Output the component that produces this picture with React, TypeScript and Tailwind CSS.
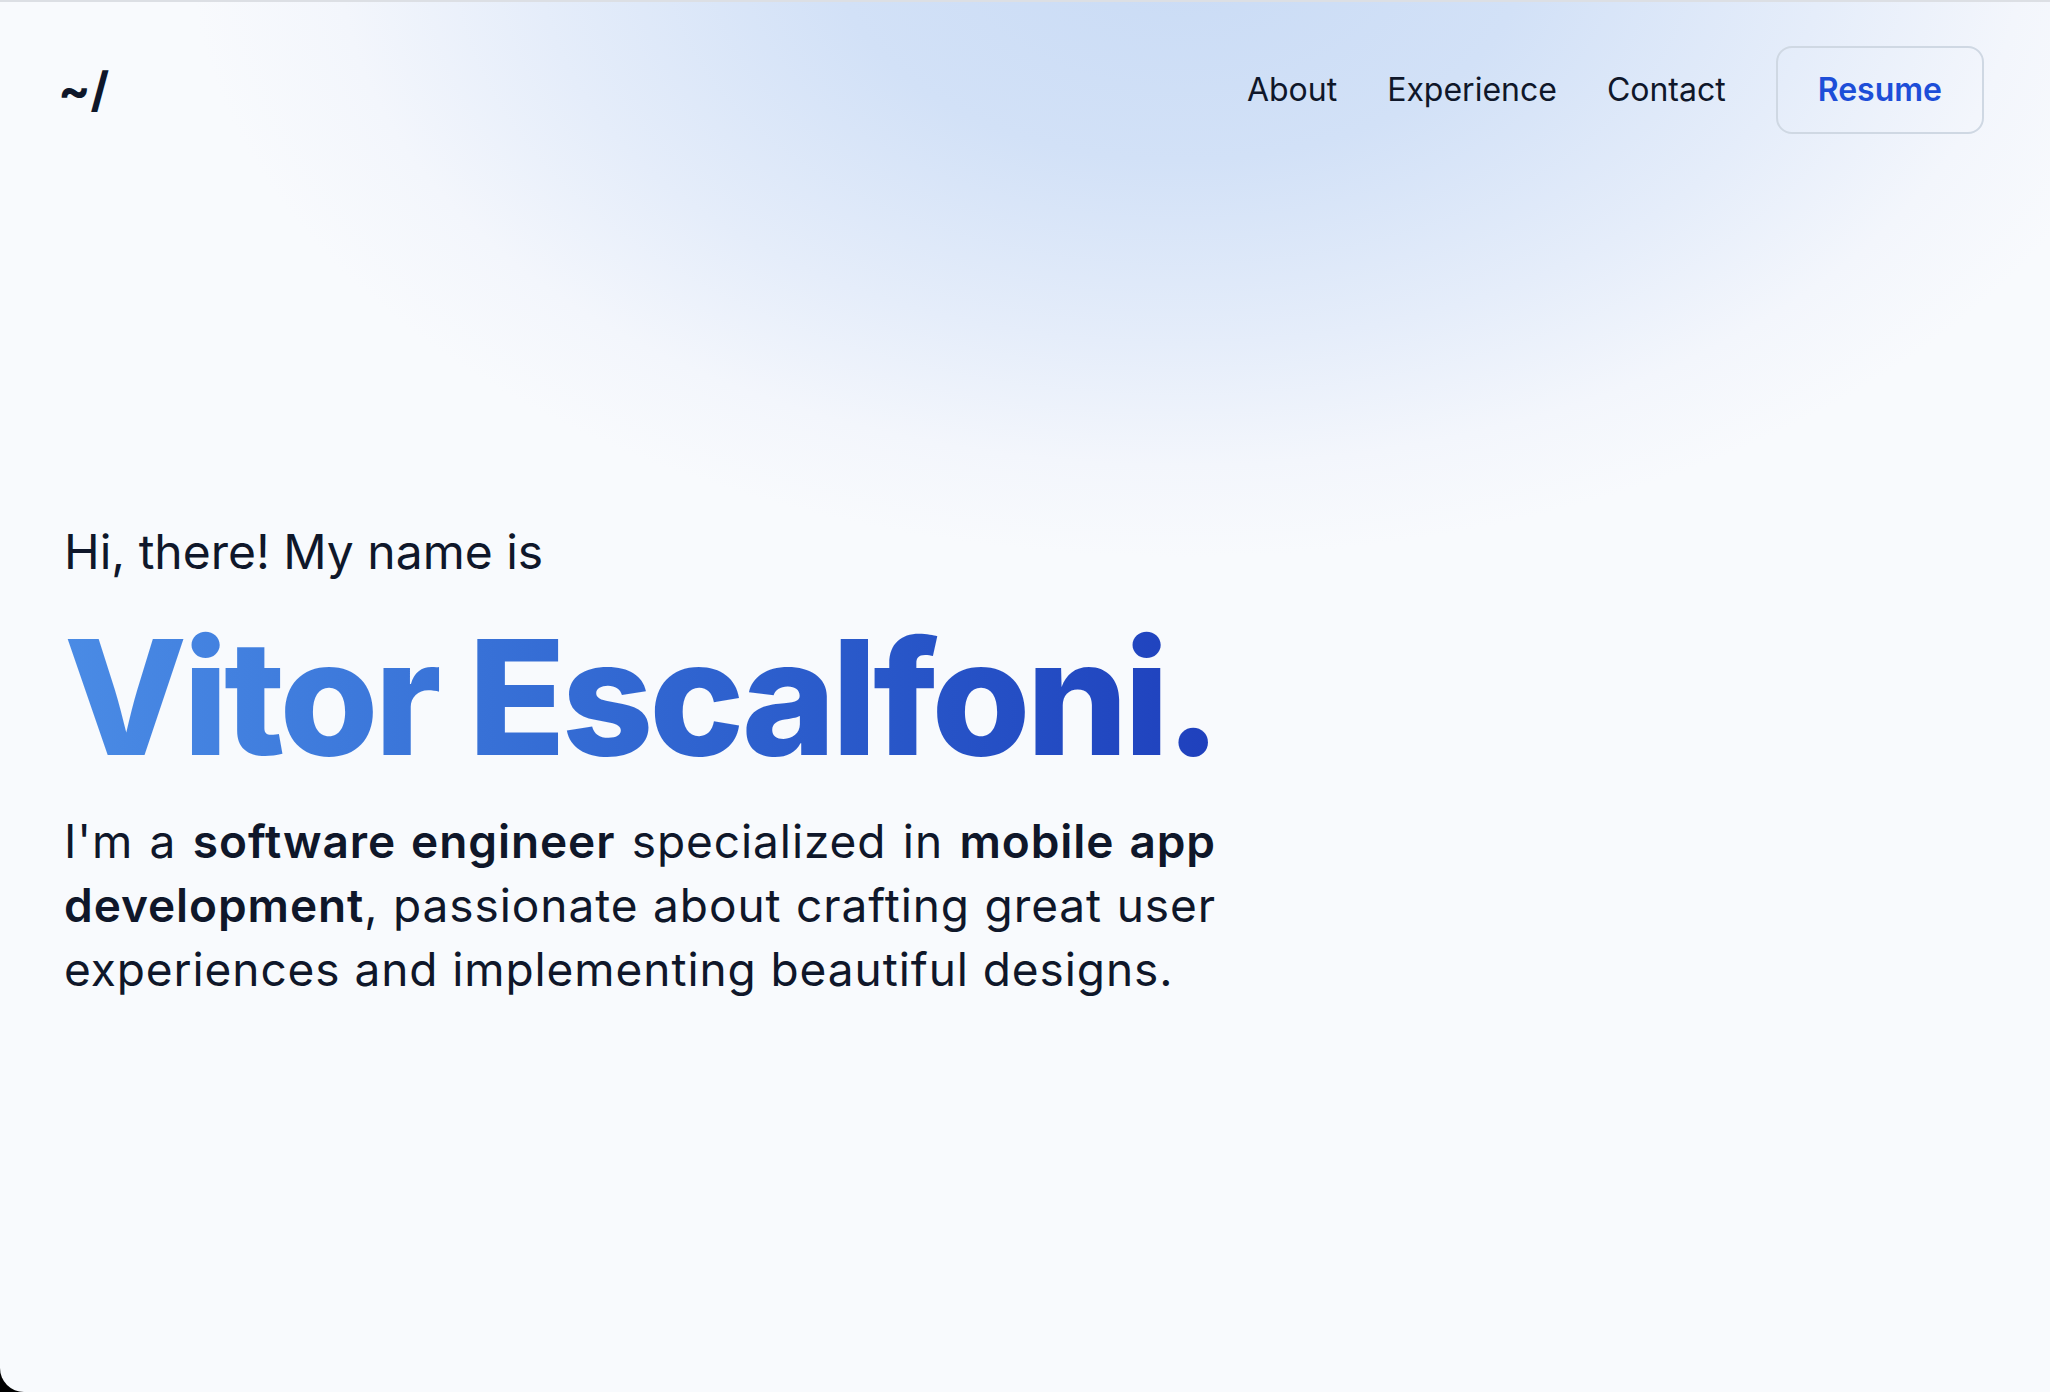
import React from "react"

const NAV_LINKS = ["About", "Experience", "Contact"]

const TEXT_DARK = "text-[#0f172a]"

function Header() {
  return (
    <header className="relative z-10 flex items-center justify-between pl-[58px] pr-[66px] py-[44px]">
      <a href="#" className={`text-[48px] leading-[48px] font-bold ${TEXT_DARK}`}>
        ~/
      </a>
      <nav className="flex items-center gap-[50px]">
        {NAV_LINKS.map(link => (
          <a key={link} href="#" className={`text-[32px] leading-[48px] ${TEXT_DARK}`}>
            {link}
          </a>
        ))}
        <a
          href="#"
          className="h-[88px] px-[40px] flex items-center rounded-[16px] border-2 border-[#cfd8e3] text-[32px] font-semibold text-[#1d4ed8]"
        >
          Resume
        </a>
      </nav>
    </header>
  )
}

function Hero() {
  return (
    <section className="relative z-10 pl-[64px] pt-[342px]">
      <p className={`text-[48px] leading-[64px] ${TEXT_DARK}`}>Hi, there! My name is</p>
      <h1 className="mt-[33px] text-[160px] leading-[160px] font-extrabold tracking-[-0.026em] w-fit bg-gradient-to-r from-[#4a8be5] to-[#1f40bd] bg-clip-text text-transparent">
        Vitor Escalfoni.
      </h1>
      <p className={`mt-[32px] max-w-[1152px] text-[46px] leading-[64px] tracking-[0.02em] text-justify ${TEXT_DARK}`}>
        I'm a <span className="font-semibold">software engineer</span> specialized in{" "}
        <span className="font-semibold">mobile app development</span>, passionate about crafting great
        user experiences and implementing beautiful designs.
      </p>
    </section>
  )
}

export default function App() {
  return (
    <div className="w-full h-[1392px] bg-black" style={{ fontFamily: "Inter, 'Noto Sans', sans-serif" }}>
      <div className="relative h-full overflow-hidden rounded-bl-[24px] bg-[#f8fafd] border-t-2 border-[#dcdfe4]">
        <div className="absolute left-[190px] top-[-665px] w-[1980px] h-[1220px] rounded-full bg-[radial-gradient(closest-side,_#c9dbf5_0%,_#d2e1f7_35%,_#e5edfa_65%,_#f3f6fc_85%,_transparent_100%)]" />
        <Header />
        <Hero />
      </div>
    </div>
  )
}
